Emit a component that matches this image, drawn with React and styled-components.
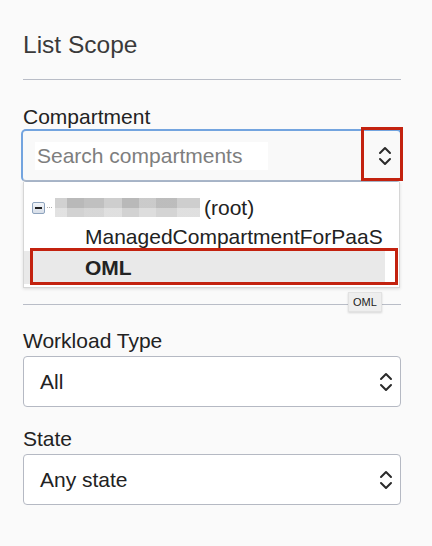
import React from "react";
import styled, { createGlobalStyle } from "styled-components";

const Global = createGlobalStyle`
  html, body { margin: 0; padding: 0; background: #fafafa; }
  body { font-family: "Liberation Sans", Arial, Helvetica, sans-serif; color: #222; }
`;

const Panel = styled.div`
  width: 378px;
  padding: 30px 0 0 23px;
  display: flex;
  flex-direction: column;
`;

const Title = styled.h2`
  margin: 0;
  font-size: 24.5px;
  font-weight: 400;
  line-height: 30px;
  color: #3a3a3a;
`;

const Divider = styled.hr`
  margin: ${(p) => p.$mt}px 0 0 0;
  border: 0;
  border-top: 1px solid #b9bdc7;
  height: 0;
  width: 378px;
`;

const Label = styled.div`
  font-size: 21px;
  line-height: 24px;
  color: #222;
  margin-top: ${(p) => p.$mt}px;
`;

const Field = styled.div`
  position: relative;
  margin-top: ${(p) => p.$mt || 0}px;
`;

const SearchBox = styled.div`
  position: relative;
  box-sizing: border-box;
  height: 53px;
  width: 381px;
  margin-left: -2px;
  border: 2px solid #73a4df;
  border-bottom-color: #aab7ca;
  border-radius: 5px;
  background: #f9f9f9;
  display: flex;
  align-items: center;
  padding-left: 12px;
`;

const SearchInput = styled.div`
  width: 233px;
  height: 28px;
  background: #fff;
  color: #7e7e7e;
  font-size: 21px;
  line-height: 28px;
  padding-left: 2px;
  box-sizing: border-box;
  white-space: nowrap;
`;

const IconSlot = styled.div`
  position: absolute;
  right: ${(p) => p.$right}px;
  top: 50%;
  transform: translateY(-50%);
  display: flex;
`;

const Select = styled.div`
  box-sizing: border-box;
  height: 51px;
  width: 378px;
  border: 1px solid #b5b9c3;
  border-radius: 4px;
  background: #fff;
  display: flex;
  align-items: center;
  padding-left: 16px;
  font-size: 21px;
  line-height: 24px;
  color: #222;
  position: relative;
`;

const Menu = styled.div`
  position: absolute;
  top: 53px;
  left: 0;
  width: 377px;
  height: 106px;
  box-sizing: border-box;
  background: #fff;
  border: 1px solid #d6d6d6;
  border-top: 0;
  box-shadow: 0 1px 3px rgba(0, 0, 0, 0.12);
  padding-top: 11px;
  z-index: 2;
`;

const TreeRow = styled.div`
  display: flex;
  align-items: center;
  font-size: 21px;
  line-height: 24px;
  color: #222;
  white-space: nowrap;
  padding-left: ${(p) => p.$indent}px;
  margin-right: 14px;
  background: ${(p) => (p.$active ? "#e9e9e9" : "transparent")};
  font-weight: ${(p) => (p.$active ? 700 : 400)};
  height: ${(p) => (p.$active ? 33 : 29)}px;
`;

const Toggle = styled.span`
  box-sizing: border-box;
  width: 13px;
  height: 12px;
  border: 1px solid #8ea3bd;
  border-radius: 2px;
  background: linear-gradient(#f2f5f9, #d7dee8);
  display: flex;
  align-items: center;
  justify-content: center;
  margin-right: 2px;
  &::after {
    content: "";
    width: 7px;
    height: 2px;
    background: #222;
  }
`;

const Dots = styled.span`
  width: 5px;
  border-top: 1px dotted #b0b0b0;
  margin-right: 3px;
`;

const Redacted = styled.span`
  width: 145px;
  height: 19px;
  margin-right: 4px;
  background:
    linear-gradient(90deg,
      rgba(255,255,255,0.35) 0 8%, rgba(255,255,255,0) 8% 20%, rgba(255,255,255,0.1) 20% 34%, rgba(255,255,255,0.3) 34% 46%,
      rgba(255,255,255,0) 46% 58%, rgba(255,255,255,0.25) 58% 70%, rgba(255,255,255,0.05) 70% 84%, rgba(255,255,255,0.3) 84% 100%),
    linear-gradient(#b9b9b9 0 50%, #d2d2d2 50% 100%);
`;

const Mark = styled.div`
  position: absolute;
  box-sizing: border-box;
  border: 3px solid #c3220f;
  left: ${(p) => p.$x}px;
  top: ${(p) => p.$y}px;
  width: ${(p) => p.$w}px;
  height: ${(p) => p.$h}px;
  z-index: 3;
  pointer-events: none;
`;

const Tooltip = styled.div`
  position: absolute;
  left: 325px;
  top: 163px;
  height: 18px;
  padding: 0 4px;
  background: #eeeeee;
  border: 1px solid #e2e2e2;
  box-shadow: 0 1px 2px rgba(0, 0, 0, 0.15);
  font-size: 11px;
  line-height: 18px;
  color: #222;
  z-index: 3;
`;

const Spacer = styled.div`
  height: 122px;
`;

const Chevrons = () => (
  <svg width="14" height="22" viewBox="0 0 14 22" fill="none" stroke="#2a2a2a" strokeWidth="2" strokeLinecap="round" strokeLinejoin="round">
    <path d="M2 8 L7 3 L12 8" />
    <path d="M2 14 L7 19 L12 14" />
  </svg>
);

export default function App() {
  return (
    <>
      <Global />
      <Panel>
        <Title>List Scope</Title>
        <Divider $mt={19} />
        <Label $mt={25}>Compartment</Label>
        <Field>
          <SearchBox>
            <SearchInput>Search compartments</SearchInput>
            <IconSlot $right={8}>
              <Chevrons />
            </IconSlot>
          </SearchBox>
          <Mark $x={338} $y={-2} $w={42} $h={54} />
          <Menu>
            <TreeRow $indent={8}>
              <Toggle />
              <Dots />
              <Redacted />
              (root)
            </TreeRow>
            <TreeRow $indent={61}>ManagedCompartmentForPaaS</TreeRow>
            <TreeRow $indent={61} $active>OML</TreeRow>
          </Menu>
          <Mark $x={7} $y={119} $w={368} $h={37} />
          <Tooltip>OML</Tooltip>
          <Spacer />
        </Field>
        <Divider $mt={0} />
        <Label $mt={24}>Workload Type</Label>
        <Field $mt={3}>
          <Select>
            All
            <IconSlot $right={7}>
              <Chevrons />
            </IconSlot>
          </Select>
        </Field>
        <Label $mt={20}>State</Label>
        <Field $mt={3}>
          <Select>
            Any state
            <IconSlot $right={7}>
              <Chevrons />
            </IconSlot>
          </Select>
        </Field>
      </Panel>
    </>
  );
}
